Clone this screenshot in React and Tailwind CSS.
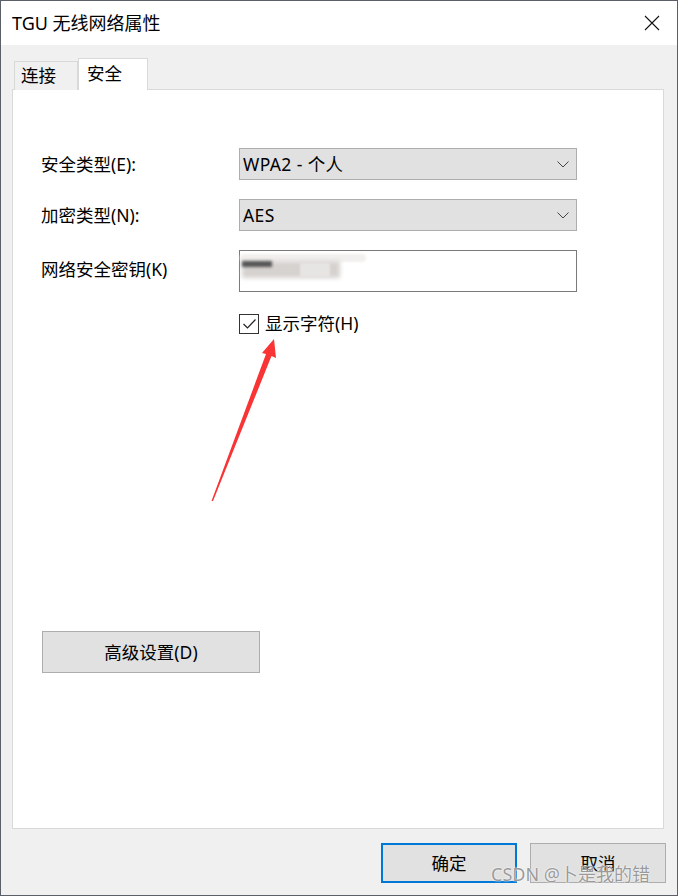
export default function App() {
  const font = { fontFamily: '"Noto Sans", "Noto Sans CJK SC", sans-serif' };
  return (
    <div
      className="relative w-[678px] h-[896px] flex flex-col border border-[#5b6068] bg-[#f0f0f0] text-[#000] overflow-hidden"
      style={font}
    >
      {/* Title bar */}
      <div className="h-[44px] bg-white flex items-center justify-between pl-[11px] pr-[16px] shrink-0">
        <span className="text-[18px] leading-none">TGU 无线网络属性</span>
        <svg width="16" height="16" viewBox="0 0 16 16" className="mr-[1px]">
          <path d="M1 1 L15 15 M15 1 L1 15" stroke="#111" strokeWidth="1.1" fill="none" />
        </svg>
      </div>

      {/* Body */}
      <div className="flex-1 flex flex-col pl-[11px] pr-[11px]">
        {/* Tabs */}
        <div className="flex items-end mt-[12px] h-[32px] relative z-10">
          <div className="ml-[2px] w-[64px] h-[29px] border border-b-0 border-[#d9d9d9] bg-[#f0f0f0] flex items-center pl-[6px] text-[17.5px] leading-none -mb-px">
            连接
          </div>
          <div className="w-[70px] h-[32px] border border-b-0 border-[#d9d9d9] bg-white flex items-start pt-[6px] pl-[8px] text-[17.5px] leading-none -mb-px">
            安全
          </div>
        </div>

        {/* Panel */}
        <div className="w-[652px] h-[740px] bg-white border border-[#d9d9d9] flex flex-col pl-[28px] text-[17.5px]">
          <div className="flex items-center mt-[58px] h-[32px]">
            <span className="w-[198px]">安全类型(E):</span>
            <div className="w-[338px] h-[32px] bg-[#e1e1e1] border border-[#adadad] flex items-center justify-between pl-[3px] pr-[7px]">
              <span className="tracking-[0.4px]">WPA2 - 个人</span>
              <svg width="12" height="7" viewBox="0 0 12 7">
                <polyline points="0.5,0.5 6,6 11.5,0.5" fill="none" stroke="#444" strokeWidth="1" />
              </svg>
            </div>
          </div>

          <div className="flex items-center mt-[19px] h-[32px]">
            <span className="w-[198px]">加密类型(N):</span>
            <div className="w-[338px] h-[32px] bg-[#e1e1e1] border border-[#adadad] flex items-center justify-between pl-[3px] pr-[7px]">
              <span className="tracking-[0.4px]">AES</span>
              <svg width="12" height="7" viewBox="0 0 12 7">
                <polyline points="0.5,0.5 6,6 11.5,0.5" fill="none" stroke="#444" strokeWidth="1" />
              </svg>
            </div>
          </div>

          <div className="flex items-center mt-[19px] h-[42px]">
            <span className="w-[198px] -mt-[4px]">网络安全密钥(K)</span>
            <div className="relative w-[338px] h-[42px] bg-white border border-[#7a7a7a]">
              {/* blurred key */}
              <div className="absolute left-[0px] top-[3px] w-[126px] h-[8px] bg-[#f2f0ee] blur-[1px] rounded-full" />
              <div className="absolute left-[2px] top-[10px] w-[98px] h-[17px] bg-[#d6d2cf] blur-[2px]" />
              <div className="absolute left-[2px] top-[10px] w-[30px] h-[6px] bg-[#555] blur-[1.5px]" />
              <div className="absolute left-[60px] top-[12px] w-[30px] h-[14px] bg-[#e7e4e4] blur-[1px]" />
            </div>
          </div>

          <div className="flex items-center ml-[198px] mt-[22px] h-[20px] gap-[6px]">
            <div className="w-[20px] h-[20px] border border-[#333] bg-white flex items-center justify-center">
              <svg width="15" height="12" viewBox="0 0 15 12">
                <polyline points="1.5,6 5.5,10 13.5,1.5" fill="none" stroke="#222" strokeWidth="1.2" />
              </svg>
            </div>
            <span className="leading-none">显示字符(H)</span>
          </div>

          <div className="mt-[297px] ml-[1px] w-[218px] h-[42px] bg-[#e1e1e1] border border-[#adadad] flex items-center justify-center">
            高级设置(D)
          </div>
        </div>

        {/* Bottom buttons */}
        <div className="flex justify-end gap-[13px] mt-[14px] text-[17.5px]">
          <div className="w-[136px] h-[40px] bg-[#e1e1e1] border-2 border-[#0078d7] flex items-center justify-center">
            确定
          </div>
          <div className="w-[136px] h-[40px] bg-[#e1e1e1] border border-[#adadad] flex items-center justify-center">
            取消
          </div>
        </div>
      </div>

      {/* Red annotation arrow */}
      <svg className="absolute left-0 top-0 pointer-events-none" width="678" height="896" viewBox="0 0 678 896">
        <polygon points="210.5,500 265,353 261,352 273,338 275,357 270.5,355 212,500" fill="#f93434" />
      </svg>

      {/* Watermark */}
      <div className="absolute left-[490px] top-[864px] text-[18px] leading-none text-[#9a9a9a] [text-shadow:0_0_2px_#fff,0_0_1px_#fff] pointer-events-none">
        CSDN @卜是我的错
      </div>
    </div>
  );
}
